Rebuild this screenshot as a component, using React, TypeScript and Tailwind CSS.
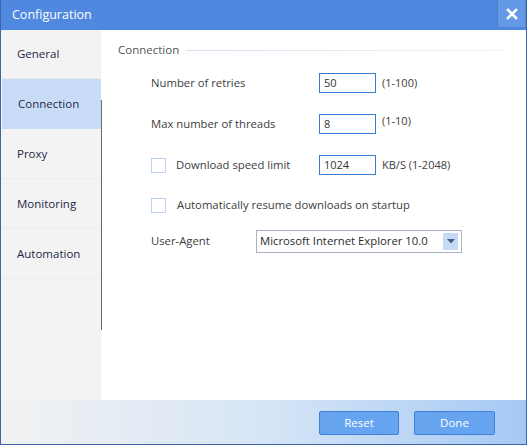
const font = { fontFamily: '"Open Sans", "Noto Sans", sans-serif' };

const tabs = ["General", "Connection", "Proxy", "Monitoring", "Automation"];

function NumberInput({ value }: { value: string }) {
  return (
    <div className="w-[57px] h-[20px] border border-[#3c7bd3] bg-white flex items-center pl-[4px] text-[11px] text-[#333]">
      {value}
    </div>
  );
}

function Checkbox() {
  return <div className="w-[15px] h-[15px] border border-[#bcd3f0] bg-white shrink-0" />;
}

export default function App() {
  return (
    <div
      className="w-[527px] h-[445px] flex flex-col border-x border-b border-[#3a67aa] bg-white overflow-hidden select-none"
      style={font}
    >
      {/* Title bar */}
      <div className="h-[30px] shrink-0 bg-[#5088e0] flex items-center justify-between">
        <span className="pl-[11px] text-[12.5px] text-white">Configuration</span>
        <div className="self-start w-[28px] h-[27px] mr-[1px] bg-[#6499e6] border-l border-[#4a7fd0] flex items-center justify-center">
          <svg width="12" height="12" viewBox="0 0 12 12">
            <path d="M2 2 L10 10 M10 2 L2 10" stroke="white" strokeWidth="2.6" strokeLinecap="square" />
          </svg>
        </div>
      </div>

      {/* Body */}
      <div className="flex-1 flex min-h-0">
        <div className="w-[100px] bg-[#f3f3f3] flex flex-col">
          {tabs.map((t, i) => (
            <div
              key={t}
              className={
                (i === 0 ? "h-[49px] " : "h-[50px] ") +
                "flex items-center pl-[16px] text-[11.5px] text-[#1d2946] border-b " +
                (i === 1 ? "bg-[#c9dcf7] border-[#c9dcf7] ml-[1px] pl-[15px]" : "border-[#ececec]")
              }
            >
              {t}
            </div>
          ))}
        </div>
        <div className="w-[1px] flex flex-col">
          <div className="h-[70px]" />
          <div className="h-[230px] bg-[#6b6b6b]" />
        </div>

        {/* Content */}
        <div className="flex-1 flex flex-col pl-[16px] pt-[12px]">
          <div className="flex items-center h-[16px]">
            <span className="text-[11.5px] text-[#555]">Connection</span>
            <div className="ml-[7px] mr-[24px] flex-1 h-[1px] bg-gradient-to-r from-[#d5e2f3] to-[#eef3fa]" />
          </div>

          <div className="flex flex-col pl-[33px] mt-[15px] text-[11.3px] text-[#3d3d3d]">
            <div className="h-[20px] flex items-center">
              <span className="w-[168px]">Number of retries</span>
              <NumberInput value="50" />
              <span className="ml-[6px] text-[11px]">(1-100)</span>
            </div>
            <div className="h-[20px] mt-[21px] flex items-center">
              <span className="w-[168px]">Max number of threads</span>
              <NumberInput value="8" />
              <span className="ml-[6px] text-[11px] -mt-[5px]">(1-10)</span>
            </div>
            <div className="h-[20px] mt-[21px] flex items-center">
              <div className="w-[168px] flex items-center">
                <Checkbox />
                <span className="ml-[10px]">Download speed limit</span>
              </div>
              <NumberInput value="1024" />
              <span className="ml-[6px] text-[11px]">KB/S (1-2048)</span>
            </div>
            <div className="h-[20px] mt-[20px] flex items-center">
              <Checkbox />
              <span className="ml-[11px]">Automatically resume downloads on startup</span>
            </div>
            <div className="h-[23px] mt-[15px] flex items-center">
              <span className="w-[105px]">User-Agent</span>
              <div className="w-[206px] h-[23px] border border-[#a9b3c2] bg-white flex items-center justify-between pl-[3px] pr-[3px]">
                <span className="text-[#2b2b2b]">Microsoft Internet Explorer 10.0</span>
                <div className="w-[15px] h-[17px] bg-[#c6daf6] flex items-center justify-center">
                  <svg width="8" height="5" viewBox="0 0 8 5">
                    <path d="M0 0 H8 L4 4.5 Z" fill="#4a5d84" />
                  </svg>
                </div>
              </div>
            </div>
          </div>
        </div>
      </div>

      {/* Footer */}
      <div className="h-[44px] shrink-0 bg-gradient-to-r from-[#f2f2f2] via-[#d6e5f6] to-[#a6c9f4] flex items-center justify-end pr-[31px] gap-[15px] pt-[2px]">
        <button className="w-[80px] h-[24px] rounded-[2px] bg-[#66a4f0] border border-[#3f81d8] text-white text-[11.5px]">
          Reset
        </button>
        <button className="w-[81px] h-[24px] rounded-[2px] bg-[#66a4f0] border border-[#3f81d8] text-white text-[11.5px]">
          Done
        </button>
      </div>
    </div>
  );
}
